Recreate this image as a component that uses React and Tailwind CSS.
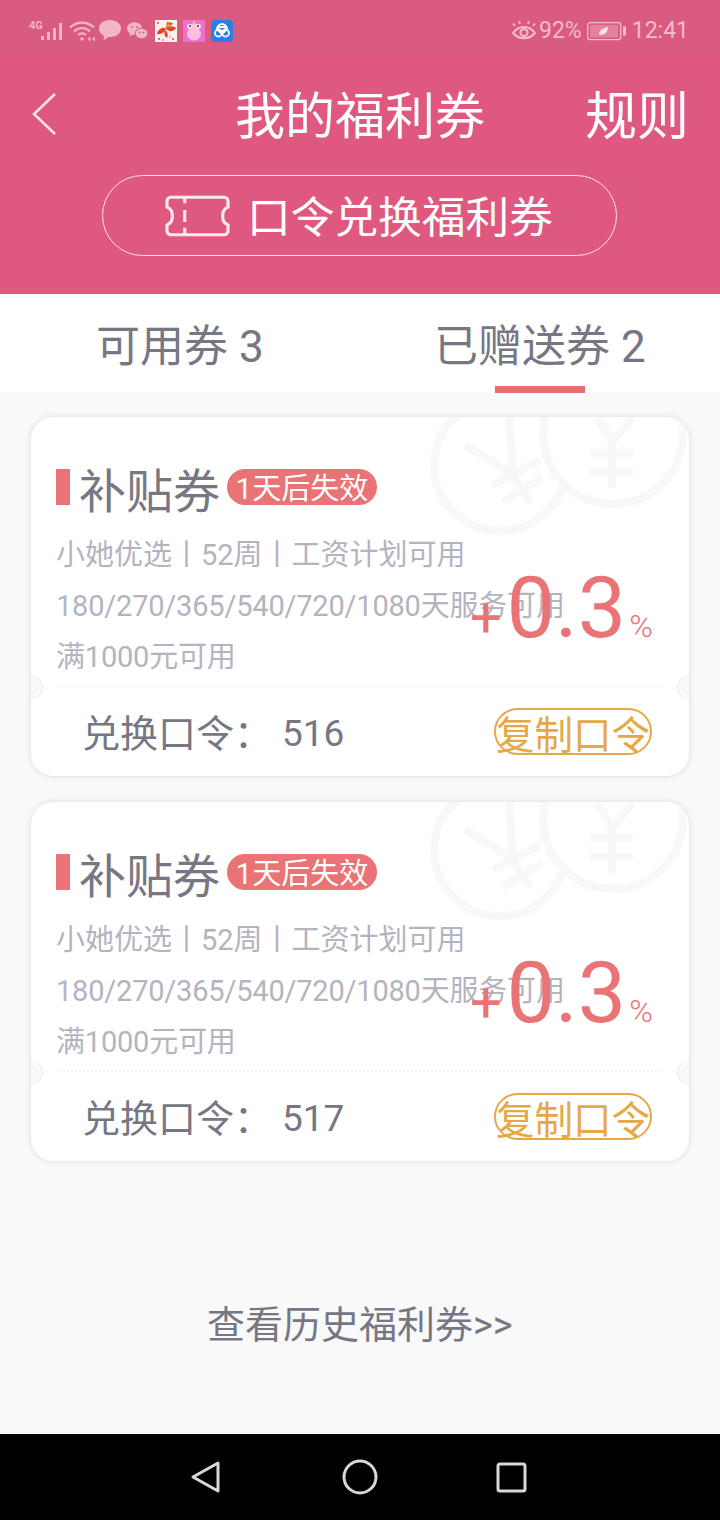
import React from "react";

const FONT = "font-['Roboto','Noto_Sans_CJK_SC',sans-serif]";

function StatusLeft() {
  return (
    <div className="flex items-center">
      <svg width="36" height="22" viewBox="0 0 36 22" className="ml-[29px]" fill="#f3b6c8">
        <text x="0" y="9" fontSize="11" fontWeight="700" fontFamily="Roboto, sans-serif">4G</text>
        <rect x="12" y="16" width="3" height="4" />
        <rect x="18" y="12" width="3" height="8" />
        <rect x="24" y="8" width="3" height="12" />
        <rect x="30" y="3" width="3" height="17" />
      </svg>
      <svg width="28" height="22" viewBox="0 0 28 22" className="ml-[3px]" fill="none" stroke="#f3b6c8" strokeWidth="2.200">
        <path d="M2 7.500C9 1 19 1 26 7.500" />
        <path d="M6 11.500C11 7 17 7 22 11.500" />
        <path d="M10 15c2.500-2 5.500-2 8 0" />
        <circle cx="14" cy="19" r="1.800" fill="#f3b6c8" stroke="none" />
        <path d="M19.500 19l3-2.500v5zM27 16.500l-3 2.500 3 2.500z" fill="#f3b6c8" stroke="none" />
      </svg>
      <svg width="22" height="21" viewBox="0 0 22 21" className="ml-[3px]" fill="#f3b6c8">
        <path d="M11 0C5 0 0 3.500 0 8.500c0 3.500 2.300 6 5 7.500l-.5 4.500 5-3.500h1.500c6 0 11-3.500 11-8.500S17 0 11 0z" />
      </svg>
      <svg width="21" height="18" viewBox="0 0 21 18" className="ml-[6px]" fill="#f3b6c8">
        <ellipse cx="7.500" cy="6.500" rx="7.500" ry="6.300" />
        <path d="M3 11l-.5 3.500 4-2.500z" />
        <ellipse cx="14.500" cy="11.500" rx="6.300" ry="5.300" stroke="#d95b80" strokeWidth="1" />
        <circle cx="5" cy="5" r="1" fill="#d95b80" />
        <circle cx="10" cy="5" r="1" fill="#d95b80" />
        <circle cx="12.500" cy="10.500" r=".9" fill="#d95b80" />
        <circle cx="16.500" cy="10.500" r=".9" fill="#d95b80" />
      </svg>
      <svg width="22" height="22" viewBox="0 0 22 22" className="ml-[7px]">
        <rect width="22" height="22" fill="#fdf3ee" />
        <path d="M2 14c1-5 5-7 9-6-1 4-5 7-9 6zM11 8l1-6 6 1-4 5zM11 9c3-3 7-3 10-1-2 4-7 4-10 1zM10 10c2 1 4 4 2 8-3-2-3-5-2-8z" fill="#e2452b" />
        <path d="M11 6l3-3 2 2-3 3z" fill="#f39a1f" />
        <circle cx="3" cy="3" r="1" fill="#e2452b" />
        <circle cx="4" cy="19" r="1" fill="#e2452b" />
        <circle cx="8" cy="20" r=".8" fill="#e2452b" />
        <circle cx="18" cy="19" r="1" fill="#e2452b" />
        <circle cx="15" cy="17" r=".7" fill="#e2452b" />
      </svg>
      <svg width="22" height="22" viewBox="0 0 22 22" className="ml-[6px]">
        <rect width="22" height="22" fill="#ef6fd0" />
        <ellipse cx="11" cy="14" rx="7" ry="6.500" fill="#f9bfe0" />
        <ellipse cx="11" cy="7" rx="7" ry="3.500" fill="#f9c4dd" />
        <ellipse cx="6.500" cy="6" rx="2.400" ry="1.800" fill="#fff" />
        <ellipse cx="15.500" cy="6" rx="2.400" ry="1.800" fill="#fff" />
        <circle cx="7" cy="6" r="1" fill="#222" />
        <circle cx="15" cy="6" r="1" fill="#222" />
        <circle cx="11" cy="2" r="1.200" fill="#f6c56a" />
      </svg>
      <svg width="22" height="22" viewBox="0 0 22 22" className="ml-[6px]">
        <rect width="22" height="22" rx="4" fill="#2b7fe6" />
        <g fill="none" stroke="#fff" strokeWidth="1.800">
          <path d="M6 9c0-3 2.500-5 5-5s5 2 5 5" />
          <path d="M6 9l5 5 5-5-2.500-2h-5z" strokeLinejoin="round" />
          <circle cx="7.500" cy="13" r="3.500" />
          <circle cx="14.500" cy="13" r="3.500" />
        </g>
      </svg>
    </div>
  );
}

function StatusRight() {
  return (
    <div className="flex items-center text-[#f5bccd] text-[23px] leading-none">
      <svg width="24" height="20" viewBox="0 0 24 20" fill="none" stroke="#f5bccd" strokeWidth="2">
        <path d="M1 12c6-8 16-8 22 0-6 7-16 7-22 0z" />
        <circle cx="12" cy="11.500" r="3.500" />
        <path d="M3 5L1 2.500M8 3L7 .5M16 3l1-2.500M21 5l2-2.500" />
      </svg>
      <span className="ml-[3px]">92%</span>
      <svg width="39" height="20" viewBox="0 0 39 20" className="ml-[5px]" fill="none">
        <rect x=".7" y="1.700" width="33" height="17" rx="2.500" stroke="#f5bccd" strokeWidth="1.300" />
        <rect x="3" y="4" width="28" height="12.500" fill="#f5bccd" fillOpacity=".4" />
        <path d="M12 14c0-5 4-7 9-8 0 5-3 8-9 8z" fill="#fbe3ea" />
        <rect x="36" y="5.500" width="3" height="9" fill="#f5bccd" />
      </svg>
      <span className="ml-[6px] mr-[31px]">12:41</span>
    </div>
  );
}

function TicketIcon() {
  return (
    <svg width="65" height="42" viewBox="0 0 66 42" fill="none" stroke="#fbe9ef" strokeWidth="3.200" strokeLinejoin="round">
      <path d="M6 2h54a4 4 0 0 1 4 4v6c-4 1.500-5.500 5-5.500 9s1.500 7.500 5.500 9v6a4 4 0 0 1-4 4H6a4 4 0 0 1-4-4v-6c4-1.500 5.500-5 5.500-9S6 13.500 2 12V6a4 4 0 0 1 4-4z" />
      <path d="M20 2v6M20 15v12M20 33v7" />
    </svg>
  );
}

function Coins() {
  return (
    <svg width="270" height="170" viewBox="0 0 270 170" className="absolute right-0 top-0" fill="none" stroke="#f8f8f8" strokeWidth="8">
      <circle cx="81" cy="48" r="66" />
      <path d="M46 28l47 28M91 0l2 56 18 30M74 68l47-25M83 85l40-24" />
      <circle cx="194" cy="17" r="70" fill="#fff" />
      <path d="M178 1l15 24 21-24M193 25v46M171 36h43M171 55h43" />
    </svg>
  );
}

function Card({ code }) {
  return (
    <div className="relative w-[658px] h-[359px] bg-white rounded-[22px] shadow-[0_0_6px_rgba(0,0,0,0.13)]">
      <div className="absolute inset-0 overflow-hidden rounded-[22px]">
        <Coins />
      </div>
      <div className="relative h-[268px] pl-[25px] pt-[52px]">
        <div className="flex items-center h-[36px]">
          <div className="w-[14px] h-[36px] bg-[#e97375]" />
          <span className="ml-[9px] text-[47px] leading-none text-[#777783] whitespace-nowrap w-[148px] translate-y-[4px]">补贴券</span>
          <span className="flex items-center justify-center w-[150px] h-[36px] rounded-full bg-[#e97375] text-white text-[29px] leading-none whitespace-nowrap">
            <span className="translate-y-[2px]">1天后失效</span>
          </span>
        </div>
        <div className="mt-[25px] text-[29px] leading-[51px] text-[#b4b4bf] whitespace-nowrap">
          <div>小她优选丨52周丨工资计划可用</div>
          <div className="tracking-[-0.2px]">180/270/365/540/720/1080天服务可用</div>
          <div className="tracking-[-0.2px]">满1000元可用</div>
        </div>
        <div className="absolute left-[439px] top-[148px] flex items-baseline text-[#e97375] leading-none whitespace-nowrap">
          <span className="text-[56px]">+</span>
          <span className="text-[86px] ml-[5px]">0.3</span>
          <span className="text-[32px] ml-[3px] font-light">%</span>
        </div>
      </div>
      <div className="mx-[28px] border-t-2 border-dotted border-[#f3f3f3]" />
      <div className="relative flex items-center justify-between h-[89px] pl-[51px] pr-[37px] text-[#777783]">
        <div className="flex items-center whitespace-nowrap translate-y-[2px]">
          <span className="text-[38px] leading-none w-[200px]">兑换口令：</span>
          <span className="text-[37px] leading-none">{code}</span>
        </div>
        <div className="flex items-center justify-center w-[158px] h-[47px] rounded-full border-2 border-[#e6a846] text-[#e6a846] text-[38.5px] leading-none whitespace-nowrap">
          <span className="translate-y-[5px]">复制口令</span>
        </div>
      </div>
      <div className="absolute left-0 top-[259px] w-[12px] h-[23px] rounded-r-full bg-[#f9f9f9] shadow-[inset_-1px_0_1px_rgba(0,0,0,0.07)]" />
      <div className="absolute right-0 top-[259px] w-[12px] h-[23px] rounded-l-full bg-[#f9f9f9] shadow-[inset_1px_0_1px_rgba(0,0,0,0.07)]" />
    </div>
  );
}

export default function App() {
  return (
    <div className={`${FONT} w-[720px] h-[1520px] flex flex-col bg-[#f9f9f9] overflow-hidden`}>
      <div className="h-[56px] pt-[5px] bg-[#d95b80] flex items-center justify-between">
        <StatusLeft />
        <StatusRight />
      </div>
      <div className="h-[238px] bg-[#df5880] text-white">
        <div className="relative h-[119px] flex items-center justify-center">
          <svg width="26" height="44" viewBox="0 0 26 44" className="absolute left-[31px] top-[36px]" fill="none" stroke="#fbe3ea" strokeWidth="2.500">
            <path d="M24 2L3 22l21 20" />
          </svg>
          <span className="text-[50px] leading-none translate-y-[1px]">我的福利券</span>
          <span className="absolute right-[31px] top-[36px] text-[52px] leading-none">规则</span>
        </div>
        <div className="ml-[102px] w-[515px] h-[81px] rounded-full border border-[#fbe3ea] flex items-center pl-[62px]">
          <TicketIcon />
          <span className="ml-[17px] text-[43.7px] leading-none whitespace-nowrap translate-y-[3px]">口令兑换福利券</span>
        </div>
      </div>
      <div className="h-[99px] bg-white flex text-[#777783] text-[44px] leading-none whitespace-nowrap">
        <div className="w-[360px] pl-[96px] pt-[31px]">可用券 3</div>
        <div className="relative flex-1 pl-[74px] pt-[31px]">
          已赠送券 2
          <div className="absolute left-[135px] bottom-0 w-[90px] h-[7px] bg-[#e56f73]" />
        </div>
      </div>
      <div className="flex-1 flex flex-col items-center pt-[24px] gap-[26px]">
        <Card code="516" />
        <Card code="517" />
        <div className="mt-[119px] w-full pl-[207px] text-[38px] leading-none text-[#777783] whitespace-nowrap">查看历史福利券&gt;&gt;</div>
      </div>
      <div className="h-[86px] bg-black flex items-center justify-center">
        <svg width="720" height="86" viewBox="0 0 720 86" fill="none" stroke="#d8d8d8" strokeWidth="3">
          <path d="M218 29v28l-25-14z" strokeLinejoin="round" />
          <circle cx="360" cy="43" r="16" />
          <rect x="498" y="30" width="27" height="27" rx="2" />
        </svg>
      </div>
    </div>
  );
}
